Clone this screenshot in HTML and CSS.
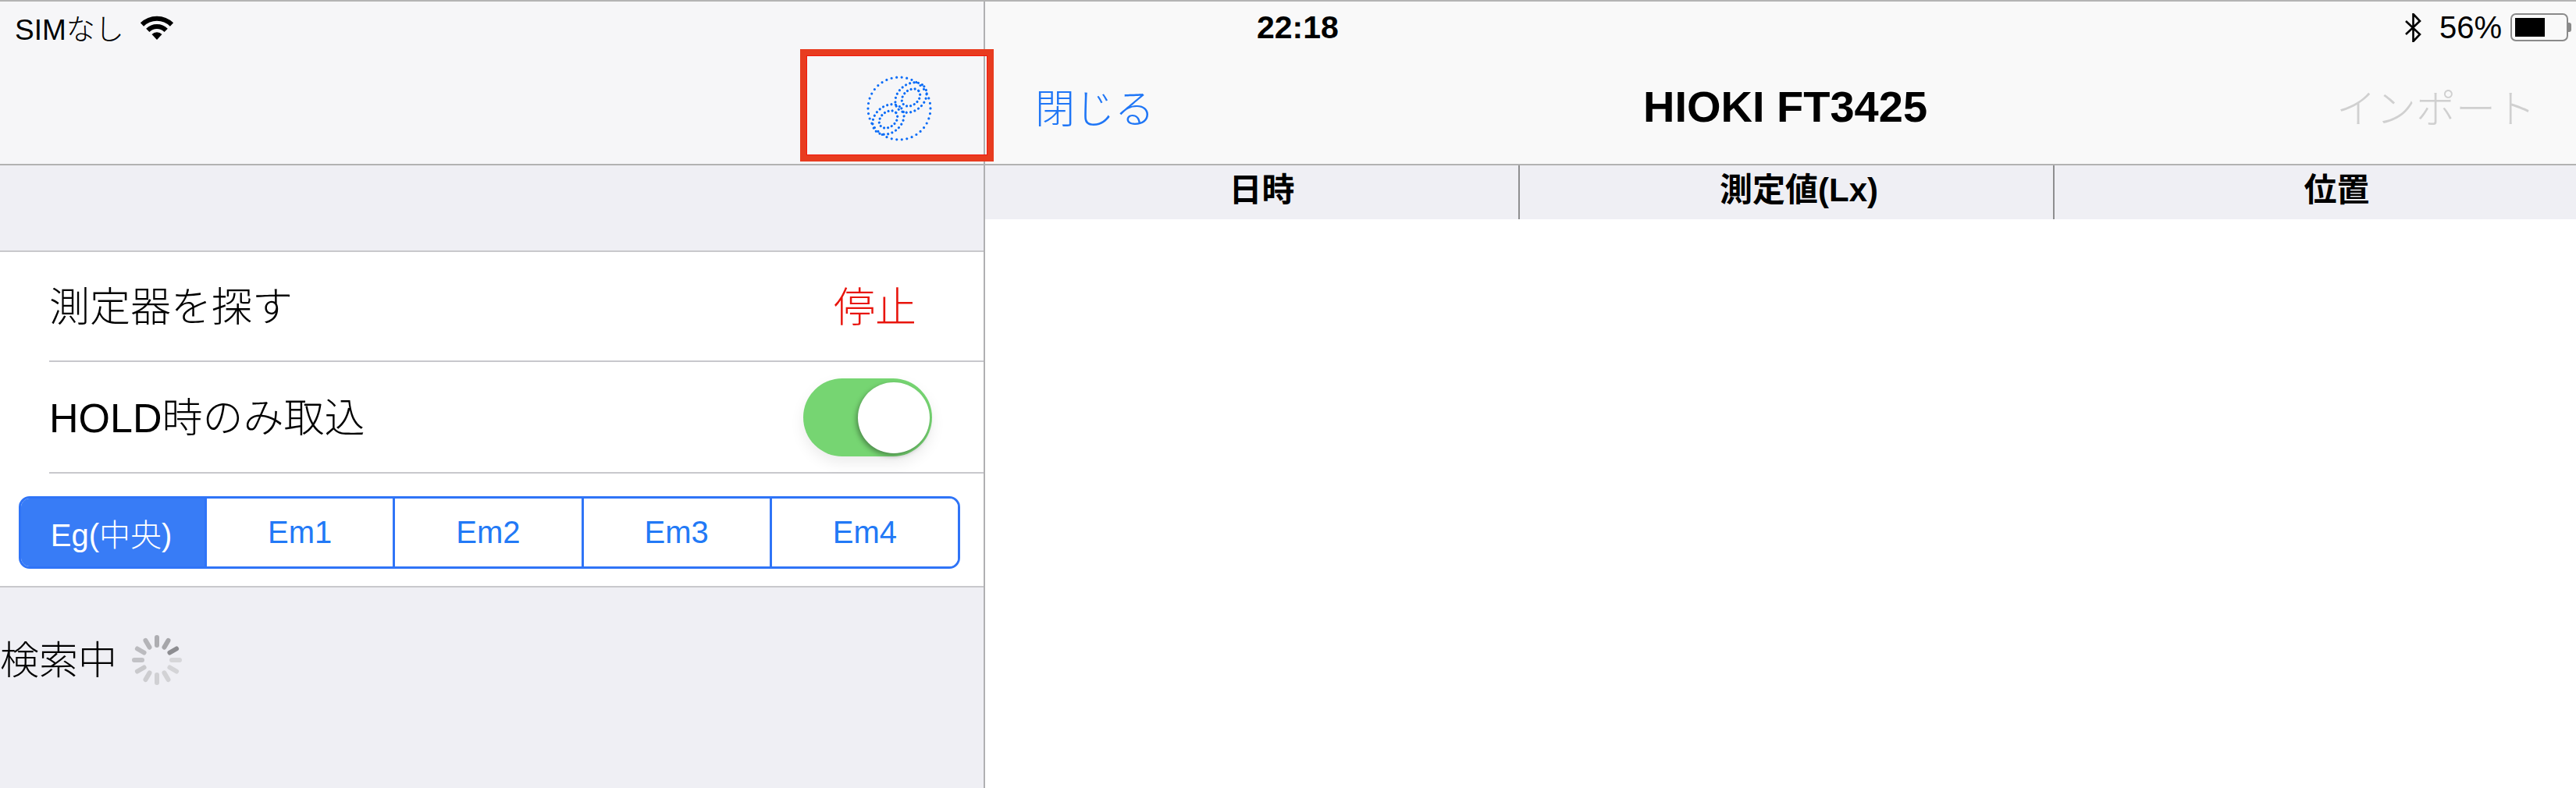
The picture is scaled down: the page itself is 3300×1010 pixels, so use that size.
FILE: index.html
```html
<!DOCTYPE html>
<html lang="ja">
<head>
    <meta charset="UTF-8">
    <title>HIOKI FT3425</title>
    <link rel="stylesheet" href="styles.css">
</head>
<body>
    <div class="app">
        <div class="master">
            <div class="topbar topbar-left">
                <div class="status">
                    <span class="carrier">SIMなし</span>
                    <svg class="wifi" width="46" height="33" viewBox="0 0 46 33">
                        <path d="M4 13.5 A27 27 0 0 1 42 13.5" fill="none" stroke="#000" stroke-width="6"/>
                        <path d="M11.3 20.8 A16.5 16.5 0 0 1 34.7 20.8" fill="none" stroke="#000" stroke-width="6"/>
                        <path d="M23 33 L16.5 26 A9 9 0 0 1 29.500 26 Z" fill="#000"/>
                    </svg>
                </div>
                <div class="nav nav-left">
                    <svg class="link-icon" width="90" height="90" viewBox="0 0 90 90">
                        <g fill="none" stroke="#0a6cf7" stroke-width="3.2" stroke-linecap="round">
                            <circle cx="45" cy="45" r="40" stroke-dasharray="0 6.6"/>
                            <ellipse cx="60" cy="31" rx="22" ry="17" transform="rotate(-40 60 31)" stroke-dasharray="0 5.4"/>
                            <ellipse cx="60" cy="31" rx="13" ry="9.500" transform="rotate(-40 60 31)" stroke-dasharray="0 5"/>
                            <ellipse cx="31" cy="59" rx="22" ry="17" transform="rotate(-40 31 59)" stroke-dasharray="0 5.4"/>
                            <ellipse cx="31" cy="59" rx="13" ry="9.500" transform="rotate(-40 31 59)" stroke-dasharray="0 5"/>
                        </g>
                    </svg>
                </div>
            </div>
            <div class="spacer"></div>
            <div class="settings">
                <div class="row">
                    <span>測定器を探す</span>
                    <span class="stop">停止</span>
                </div>
                <div class="row row-switch">
                    <span>HOLD時のみ取込</span>
                    <div class="switch"><div class="thumb"></div></div>
                </div>
                <div class="row-segment">
                    <div class="segment">
                        <div class="seg-item active">Eg(中央)</div>
                        <div class="seg-item">Em1</div>
                        <div class="seg-item">Em2</div>
                        <div class="seg-item">Em3</div>
                        <div class="seg-item">Em4</div>
                    </div>
                </div>
            </div>
            <div class="searching">
                <span>検索中</span>
                <svg class="spinner" width="72" height="72" viewBox="0 0 72 72">
                    <g stroke-width="6" stroke-linecap="round">
                        <line x1="36" y1="7" x2="36" y2="17" stroke="#adadb1"/>
                        <line x1="36" y1="7" x2="36" y2="17" stroke="#a6a6aa" transform="rotate(30 36 36)"/>
                        <line x1="36" y1="7" x2="36" y2="17" stroke="#8d8d91" transform="rotate(60 36 36)"/>
                        <line x1="36" y1="7" x2="36" y2="17" stroke="#d6d6d9" transform="rotate(90 36 36)"/>
                        <line x1="36" y1="7" x2="36" y2="17" stroke="#d4d4d7" transform="rotate(120 36 36)"/>
                        <line x1="36" y1="7" x2="36" y2="17" stroke="#d2d2d5" transform="rotate(150 36 36)"/>
                        <line x1="36" y1="7" x2="36" y2="17" stroke="#d0d0d3" transform="rotate(180 36 36)"/>
                        <line x1="36" y1="7" x2="36" y2="17" stroke="#cdcdd0" transform="rotate(210 36 36)"/>
                        <line x1="36" y1="7" x2="36" y2="17" stroke="#c9c9cc" transform="rotate(240 36 36)"/>
                        <line x1="36" y1="7" x2="36" y2="17" stroke="#c2c2c6" transform="rotate(270 36 36)"/>
                        <line x1="36" y1="7" x2="36" y2="17" stroke="#bbbbbf" transform="rotate(300 36 36)"/>
                        <line x1="36" y1="7" x2="36" y2="17" stroke="#b4b4b8" transform="rotate(330 36 36)"/>
                    </g>
                </svg>
            </div>
        </div>

        <div class="detail">
            <div class="topbar topbar-right">
                <div class="status status-right">
                    <span class="time">22:18</span>
                    <div class="status-end">
                        <svg class="bluetooth" width="23" height="37" viewBox="0 0 23 37">
                            <path d="M2 10 L20 27 L11.500 36 V1 L20 10 L2 27" fill="none" stroke="#000" stroke-width="2.600"/>
                        </svg>
                        <span class="percent">56%</span>
                        <div class="battery"><div class="battery-level"></div></div>
                        <div class="battery-cap"></div>
                    </div>
                </div>
                <div class="nav nav-right">
                    <span class="close">閉じる</span>
                    <span class="title">HIOKI FT3425</span>
                    <span class="import">インポート</span>
                </div>
            </div>
            <div class="table-head">
                <div class="col">日時</div>
                <div class="col">測定値(Lx)</div>
                <div class="col">位置</div>
            </div>
        </div>

        <div class="highlight"></div>
    </div>
</body>
</html>
```

FILE: styles.css
```css
* {
    box-sizing: border-box;
}

body {
    margin: 0;
    font-family: "Liberation Sans", "Noto Sans CJK JP", sans-serif;
    font-weight: 300;
    color: #000;
    background-color: #fff;
}

.app {
    position: relative;
    display: flex;
    width: 3300px;
    height: 1010px;
    overflow: hidden;
    border-top: 2px solid #b4b4b4;
}

.master {
    width: 1262px;
    flex-shrink: 0;
    border-right: 2px solid #b0b0b2;
    background-color: #efeff4;
}

.detail {
    flex: 1;
    min-width: 0;
    overflow: hidden;
    background-color: #fff;
}

.topbar {
    height: 210px;
    border-bottom: 2px solid #b2b2b2;
}

.topbar-left {
    background-color: #f6f6f8;
}

.topbar-right {
    background-color: #f9f9f9;
}

.status {
    display: flex;
    align-items: center;
    height: 66px;
    padding-left: 19px;
}

.carrier {
    font-size: 37px;
    width: 159px;
}

.wifi {
    margin-top: -2px;
}

.status-right {
    position: relative;
    padding-left: 0;
    justify-content: flex-end;
    padding-right: 6px;
}

.time {
    position: absolute;
    left: 348px;
    font-size: 41px;
    font-weight: bold;
}

.status-end {
    display: flex;
    align-items: center;
}

.percent {
    font-size: 40px;
    margin-left: 22px;
    margin-right: 11px;
}

.battery {
    width: 74px;
    height: 36px;
    padding: 4px;
    border: 2px solid #8a8a8a;
    border-radius: 7px;
}

.battery-level {
    width: 38px;
    height: 24px;
    background-color: #000;
}

.battery-cap {
    width: 4px;
    height: 12px;
    border-radius: 0 3px 3px 0;
    background-color: #8a8a8a;
}

.nav {
    height: 142px;
}

.nav-left {
    display: flex;
    align-items: center;
    justify-content: flex-end;
    padding-right: 63px;
}

.nav-right {
    display: grid;
    grid-template-columns: 1fr auto 1fr;
    align-items: center;
    padding: 0 52px 6px 64px;
}

.close {
    font-size: 51px;
    color: #1f76f6;
}

.title {
    font-size: 56px;
    font-weight: bold;
}

.import {
    font-size: 51px;
    color: #d0d0d0;
    text-align: right;
}

.spacer {
    height: 111px;
    border-bottom: 2px solid #c8c8cc;
}

.settings {
    background-color: #fff;
    border-bottom: 2px solid #c8c8cc;
}

.row {
    display: flex;
    align-items: center;
    justify-content: space-between;
    height: 141px;
    margin-left: 63px;
    padding-right: 86px;
    border-bottom: 2px solid #c8c8cc;
    font-size: 52px;
}

.row > span {
    padding-bottom: 6px;
}

.row-switch {
    height: 143px;
    padding-right: 66px;
}

.stop {
    font-size: 53px;
    color: #e8140c;
}

.switch {
    position: relative;
    width: 165px;
    height: 100px;
    border-radius: 50px;
    background-color: #76d572;
    box-shadow: 0 8px 18px rgba(0, 0, 0, 0.08);
}

.thumb {
    position: absolute;
    top: 5px;
    right: 3px;
    width: 92px;
    height: 91px;
    border-radius: 50%;
    background-color: #fff;
    box-shadow: -2px 3px 6px rgba(0, 0, 0, 0.35);
}

.row-segment {
    height: 144px;
    padding: 29px 30px 0 24px;
}

.segment {
    display: flex;
    height: 93px;
    border: 3px solid #2f74f7;
    border-radius: 14px;
    overflow: hidden;
}

.seg-item {
    flex: 1;
    display: flex;
    align-items: center;
    justify-content: center;
    border-right: 3px solid #2f74f7;
    font-size: 40px;
    color: #2279f6;
    background-color: #fff;
}

.seg-item:last-child {
    border-right: none;
}

.seg-item.active {
    flex: 0 0 238px;
    padding-right: 4px;
    color: #fff;
    background-color: #387cf6;
}

.searching {
    display: flex;
    align-items: center;
    gap: 15px;
    margin-top: 53px;
    font-size: 50px;
}

.searching span {
    padding-bottom: 7px;
}

.table-head {
    display: flex;
    height: 69px;
    background-color: #efeff4;
}

.col {
    width: 685px;
    flex-shrink: 0;
    padding-top: 2px;
    text-align: center;
    font-size: 42px;
    font-weight: bold;
    line-height: 60px;
    border-right: 2px solid #8e8e90;
}

.col:nth-child(1) {
    padding-left: 26px;
}

.col:nth-child(2) {
    padding-left: 32px;
}

.col:nth-child(3) {
    padding-left: 38px;
    border-right: none;
}

/* red marker over the link button */
.highlight {
    position: absolute;
    left: 1025px;
    top: 61px;
    width: 248px;
    height: 144px;
    border: 8px solid #e83c20;
    box-shadow: inset 0 0 0 1px #f5140a;
}
```
